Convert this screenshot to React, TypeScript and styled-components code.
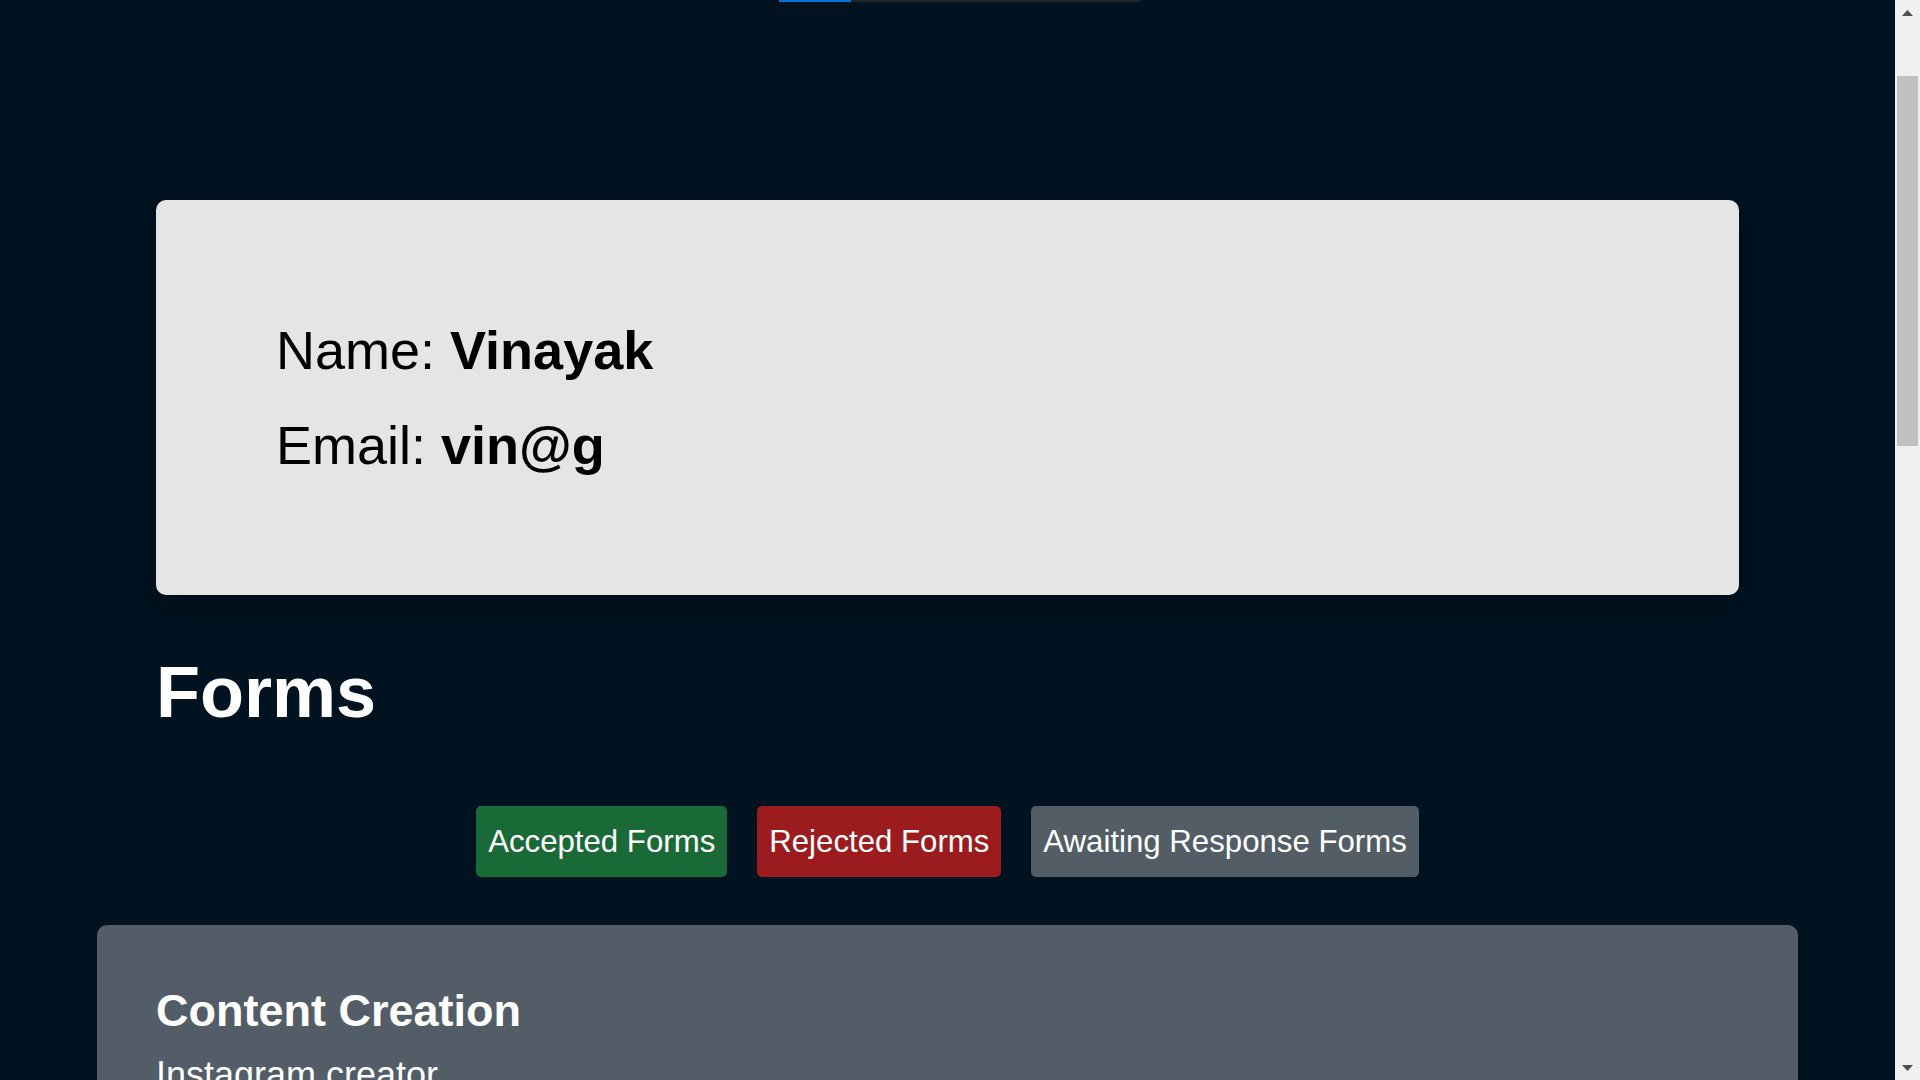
import React from "react";
import styled, { createGlobalStyle } from "styled-components";

const GlobalStyle = createGlobalStyle`
  html, body {
    margin: 0;
    padding: 0;
    height: 100%;
    overflow: hidden;
    background: #011220;
  }
  body {
    font-family: "Liberation Sans", Arial, sans-serif;
  }
  * { box-sizing: border-box; }
`;

const Shell = styled.div`
  display: flex;
  width: 100vw;
  height: 100vh;
  overflow: hidden;
`;

const Main = styled.main`
  flex: 1;
  min-width: 0;
  background: #011220;
  overflow: hidden;
  display: flex;
  flex-direction: column;
`;

const TopStrip = styled.div`
  display: flex;
  justify-content: center;
  padding-left: 25px;
  height: 2px;
`;

const StripSegment = styled.div<{ $w: number; $c: string }>`
  width: ${(p) => p.$w}px;
  height: 2px;
  background: ${(p) => p.$c};
`;

const ProfileCard = styled.section`
  margin: 198px 156px 0;
  padding: 119px 117px 119px 120px;
  background: #e5e5e5;
  border-radius: 10px;
  box-shadow: 0 10px 28px rgba(0, 0, 0, 0.25);
  display: flex;
  flex-direction: column;
  gap: 33px;
`;

const InfoLine = styled.p`
  margin: 0;
  font-size: 54px;
  line-height: 62px;
  color: #000;
  font-weight: 400;
`;

const Strong = styled.b`
  font-weight: 700;
`;

const Title = styled.h1`
  margin: 56px 156px 0;
  font-size: 72px;
  line-height: 83px;
  font-weight: 700;
  color: #fff;
`;

const ButtonRow = styled.div`
  margin-top: 72px;
  display: flex;
  justify-content: center;
  gap: 30px;
`;

const FilterButton = styled.button<{ $bg: string }>`
  border: none;
  border-radius: 5px;
  background: ${(p) => p.$bg};
  color: #fff;
  font-family: "Liberation Sans", Arial, sans-serif;
  font-size: 31.2px;
  line-height: 36px;
  padding: 17.5px 12px;
  cursor: pointer;
`;

const FormCard = styled.section`
  margin: 48px 97px 0;
  padding: 60px 59px 40px;
  background: #535d67;
  border-radius: 10px;
  color: #fff;
`;

const FormTitle = styled.h2`
  margin: 0;
  font-size: 45px;
  line-height: 52px;
  font-weight: 700;
`;

const FormDesc = styled.p`
  margin: 17px 0 0;
  font-size: 36px;
  line-height: 41px;
`;

const Scrollbar = styled.aside`
  width: 25px;
  height: 100vh;
  background: #f0f0f0;
  display: flex;
  flex-direction: column;
`;

const ArrowBox = styled.div`
  height: 25px;
  display: flex;
  align-items: center;
  justify-content: center;
`;

const Track = styled.div`
  flex: 1;
  display: flex;
  flex-direction: column;
`;

const Thumb = styled.div`
  margin: 51px 2px 0;
  height: 370px;
  background: #c1c1c1;
`;

const Arrow = ({ down }: { down?: boolean }) => (
  <svg width="11" height="6" viewBox="0 0 11 6">
    {down ? (
      <polygon points="0,0 11,0 5.5,6" fill="#505050" />
    ) : (
      <polygon points="5.5,0 11,6 0,6" fill="#505050" />
    )}
  </svg>
);

export default function App() {
  return (
    <>
      <GlobalStyle />
      <Shell>
        <Main>
          <TopStrip>
            <StripSegment $w={72} $c="#0a74d6" />
            <StripSegment $w={290} $c="#222529" />
          </TopStrip>
          <ProfileCard>
            <InfoLine>
              Name: <Strong>Vinayak</Strong>
            </InfoLine>
            <InfoLine>
              Email: <Strong>vin@g</Strong>
            </InfoLine>
          </ProfileCard>
          <Title>Forms</Title>
          <ButtonRow>
            <FilterButton $bg="#1a6a37">Accepted Forms</FilterButton>
            <FilterButton $bg="#9b1b1e">Rejected Forms</FilterButton>
            <FilterButton $bg="#535d66">Awaiting Response Forms</FilterButton>
          </ButtonRow>
          <FormCard>
            <FormTitle>Content Creation</FormTitle>
            <FormDesc>Instagram creator</FormDesc>
          </FormCard>
        </Main>
        <Scrollbar>
          <ArrowBox>
            <Arrow />
          </ArrowBox>
          <Track>
            <Thumb />
          </Track>
          <ArrowBox>
            <Arrow down />
          </ArrowBox>
        </Scrollbar>
      </Shell>
    </>
  );
}
